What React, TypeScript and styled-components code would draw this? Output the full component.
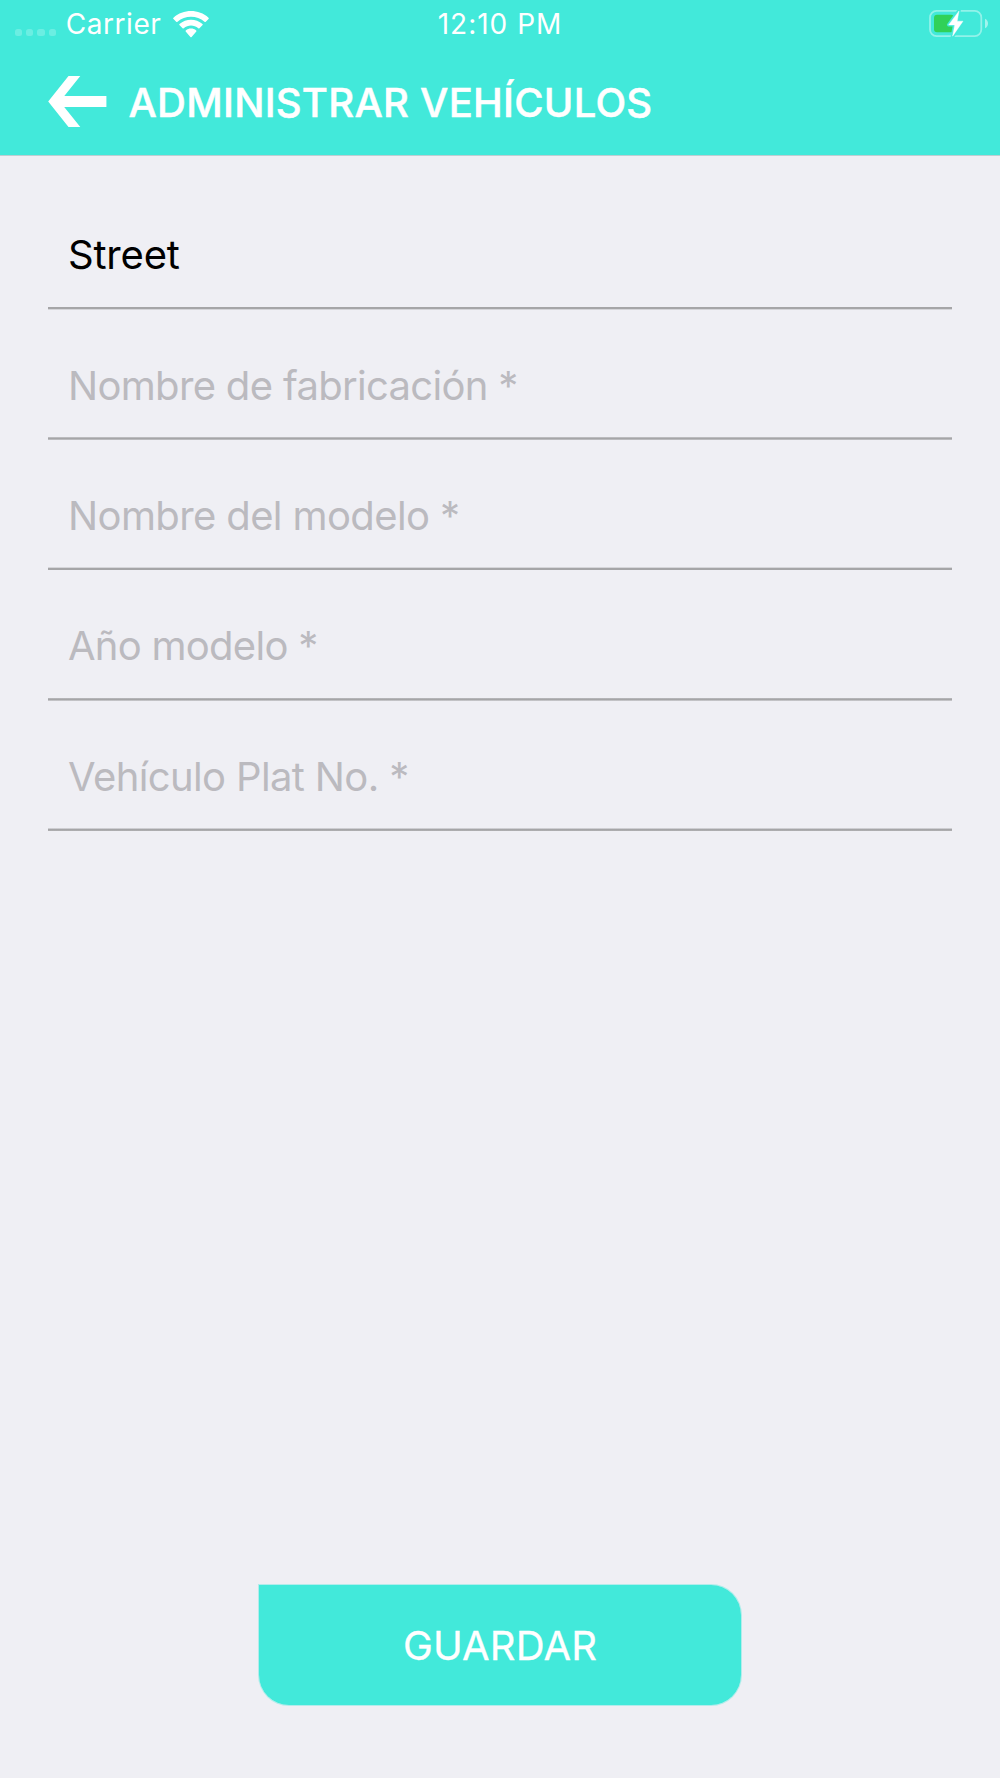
import React from 'react';
import styled, { createGlobalStyle } from 'styled-components';

const teal = '#42e9da';
const canvas = '#efeff4';

const GlobalStyle = createGlobalStyle`
  * { box-sizing: border-box; }
  body {
    margin: 0;
    background: ${canvas};
    font-family: Inter, "Liberation Sans", sans-serif;
  }
`;

const Screen = styled.div`
  display: flex;
  flex-direction: column;
  width: 1000px;
  height: 1778px;
  background: ${canvas};
`;

const Header = styled.header`
  flex: none;
  height: 156px;
  background: ${teal};
  border-bottom: 1px solid #bccfd2;
  color: #fff;
`;

const StatusBar = styled.div`
  display: grid;
  grid-template-columns: 1fr auto 1fr;
  align-items: center;
  height: 48px;
  padding: 0 12px 0 15px;
  font-size: 28px;
  line-height: 34px;
`;

const StatusText = styled.span<{ $tracking: number }>`
  letter-spacing: ${(p) => p.$tracking}px;
  white-space: nowrap;
`;

const Clock = styled(StatusText)`
  padding-right: 3px;
`;

const StatusLeft = styled.div`
  display: flex;
  align-items: center;
`;

const StatusRight = styled.div`
  display: flex;
  justify-content: flex-end;
`;

const SignalDots = styled.div`
  display: flex;
  gap: 4px;
  margin: 17px 10px 0 0;
`;

const Dot = styled.i`
  width: 7.2px;
  height: 7.2px;
  border-radius: 2.5px;
  background: rgba(255, 255, 255, 0.22);
`;

const WifiIcon = styled.svg`
  margin-left: 11.8px;
`;

const TitleBar = styled.div`
  display: flex;
  align-items: center;
  gap: 21.5px;
  height: 107px;
  padding-left: 48px;
`;

const BackButton = styled.button`
  display: flex;
  padding: 0;
  border: 0;
  background: none;
  color: inherit;
`;

const Title = styled.h1`
  margin: 0;
  padding-top: 2px;
  font-size: 40px;
  line-height: 48px;
  font-weight: 500;
  letter-spacing: 0.25px;
  -webkit-text-stroke: 0.5px currentColor;
`;

const Form = styled.form`
  flex: 1;
  display: flex;
  flex-direction: column;
  padding: 23.47px 48px 72px;
`;

const Field = styled.label`
  display: flex;
  flex-direction: column;
  justify-content: flex-end;
  height: 130.33px;
`;

const FieldText = styled.span<{ $filled?: boolean; $tracking: number }>`
  padding: 0 20px;
  margin-bottom: 27.6px;
  font-size: 40px;
  line-height: 48px;
  letter-spacing: ${(p) => p.$tracking}px;
  color: ${(p) => (p.$filled ? '#000' : '#bbbabf')};
`;

const tone = (a: number) => `rgba(165, 165, 167, ${a})`;

const Rule = styled.div<{ $edge: [number, number] }>`
  height: 3px;
  background: linear-gradient(
    ${(p) => tone(p.$edge[0])} 0 1px,
    ${tone(1)} 1px 2px,
    ${(p) => tone(p.$edge[1])} 2px 3px
  );
`;

const SaveButton = styled.button`
  align-self: center;
  width: 484px;
  height: 122px;
  margin-top: auto;
  padding: 2px 0 0;
  border: 1px solid rgba(66, 233, 218, 0.35);
  border-radius: 0 31px 31px 31px;
  background: ${teal};
  background-clip: padding-box;
  color: #fff;
  font: 400 40px/48px Inter, "Liberation Sans", sans-serif;
  letter-spacing: 0.17px;
  -webkit-text-stroke: 0.3px currentColor;
`;

type FieldSpec = {
  text: string;
  filled?: boolean;
  tracking: number;
  edge: [number, number];
};

const fields: FieldSpec[] = [
  { text: 'Street', filled: true, tracking: -0.2, edge: [1, 0.35] },
  { text: 'Nombre de fabricación *', tracking: -0.68, edge: [0.7, 0.7] },
  { text: 'Nombre del modelo *', tracking: -0.62, edge: [0.35, 1] },
  { text: 'Año modelo *', tracking: -0.73, edge: [0.8, 0.6] },
  { text: 'Vehículo Plat No. *', tracking: -0.63, edge: [0.45, 0.9] },
];

export default function App() {
  return (
    <Screen>
      <GlobalStyle />
      <Header>
        <StatusBar>
          <StatusLeft>
            <SignalDots>
              <Dot />
              <Dot />
              <Dot />
              <Dot />
            </SignalDots>
            <StatusText $tracking={0.55}>Carrier</StatusText>
            <WifiIcon width="36" height="27" viewBox="0 0 36 27" fill="#fff">
              <path d="M0 7.6 Q0 7.2 .5 6.7 C10.2-2.2 25.8-2.2 35.5 6.7 Q36.2 7.3 35.5 8 L32.8 10.8 Q32.2 11.4 31.5 10.8 C24 4 12 4 4.5 10.8 Q3.8 11.4 3.2 10.8 L.5 8 Z" />
              <path d="M6.4 14 Q6 13.5 6.5 13 C13 7.2 23 7.2 29.5 13 Q30 13.5 29.6 14 L26.4 17.2 Q25.9 17.7 25.3 17.2 C21 13.5 15 13.5 10.7 17.2 Q10.1 17.7 9.6 17.2 Z" />
              <path d="M12.7 20.4 Q12.2 19.9 12.8 19.4 C15.8 17 20.2 17 23.2 19.4 Q23.8 19.9 23.3 20.4 L18.6 25.9 Q18 26.5 17.4 25.9 Z" />
            </WifiIcon>
          </StatusLeft>
          <Clock $tracking={1}>12:10 PM</Clock>
          <StatusRight>
            <svg width="59" height="30" viewBox="929 9 59 30">
              <rect x="930" y="10.9" width="51.3" height="25.2" rx="6.5" fill="none" stroke="#fff" strokeOpacity=".42" strokeWidth="1.8" />
              <rect x="934" y="14.7" width="20" height="17.6" rx="3" fill="#30d158" />
              <path d="M985 18.8 C989 20.5 989 26.5 985 28.2 Z" fill="#fff" fillOpacity=".5" />
              <path d="M959 10.5 L948.8 24.7 H954.7 L952.5 36.5 L962.8 21.4 H957.2 Z" fill={teal} stroke={teal} strokeWidth="3.6" strokeLinejoin="round" />
              <path d="M959 11 L948.6 24.9 H954.7 L952.6 36.2 L963 21.2 H957.2 Z" fill="#fff" stroke="#fff" strokeWidth=".4" />
            </svg>
          </StatusRight>
        </StatusBar>
        <TitleBar>
          <BackButton aria-label="Atrás">
            <svg width="59" height="51" viewBox="0 0 59 51" fill="#fff">
              <path d="M.2 25.5 L20.5 0 H32.3 L16.3 20 H58.4 V31 H16.2 L32.3 51 H20.5 Z" />
            </svg>
          </BackButton>
          <Title>ADMINISTRAR VEHÍCULOS</Title>
        </TitleBar>
      </Header>
      <Form onSubmit={(e) => e.preventDefault()}>
        {fields.map((f) => (
          <Field key={f.text}>
            <FieldText $filled={f.filled} $tracking={f.tracking}>
              {f.text}
            </FieldText>
            <Rule $edge={f.edge} />
          </Field>
        ))}
        <SaveButton>GUARDAR</SaveButton>
      </Form>
    </Screen>
  );
}
